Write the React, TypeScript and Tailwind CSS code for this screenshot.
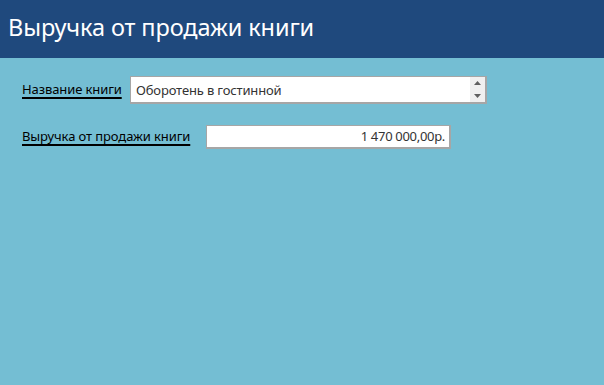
export default function App() {
  return (
    <div className="w-[604px] h-[385px] bg-[#74bed3] overflow-hidden" style={{ fontFamily: '"Noto Sans", "Open Sans", sans-serif' }}>
      <header className="h-[58px] bg-[#1f497d] flex items-center pl-[8px]">
        <h1 className="text-white text-[23.5px] leading-none pb-[2px] tracking-[-0.1px]">Выручка от продажи книги</h1>
      </header>

      <div className="pl-[22px] pt-[18px] flex flex-col gap-[21px]">
        <div className="flex items-center">
          <span className="text-[13px] text-black underline underline-offset-[3px] decoration-[1.5px] w-[108px] tracking-[-0.1px]">Название книги</span>
          <div className="w-[357px] h-[28px] bg-white border border-[#a6a6a6] border-b-2 border-r-2 flex items-stretch">
            <span className="flex-1 pl-[5px] pt-[4px] text-[13px] text-[#333] tracking-[-0.15px]">Оборотень в гостинной</span>
            <div className="w-[15px] bg-[#f0f0f0] flex flex-col justify-between items-center py-[4px]">
              <svg width="7" height="4" viewBox="0 0 7 4"><path d="M3.5 0L7 4H0z" fill="#606060" /></svg>
              <svg width="7" height="4" viewBox="0 0 7 4"><path d="M0 0h7L3.5 4z" fill="#606060" /></svg>
            </div>
          </div>
        </div>

        <div className="flex items-center">
          <span className="text-[13px] text-black underline underline-offset-[3px] decoration-[1.5px] w-[184px] tracking-[-0.1px]">Выручка от продажи книги</span>
          <div className="w-[245px] h-[24px] bg-white border border-[#a6a6a6] border-b-2 border-r-2 flex items-center justify-end pr-[4px]">
            <span className="text-[13px] text-[#333] tracking-[-0.3px]">1 470 000,00р.</span>
          </div>
        </div>
      </div>
    </div>
  );
}
